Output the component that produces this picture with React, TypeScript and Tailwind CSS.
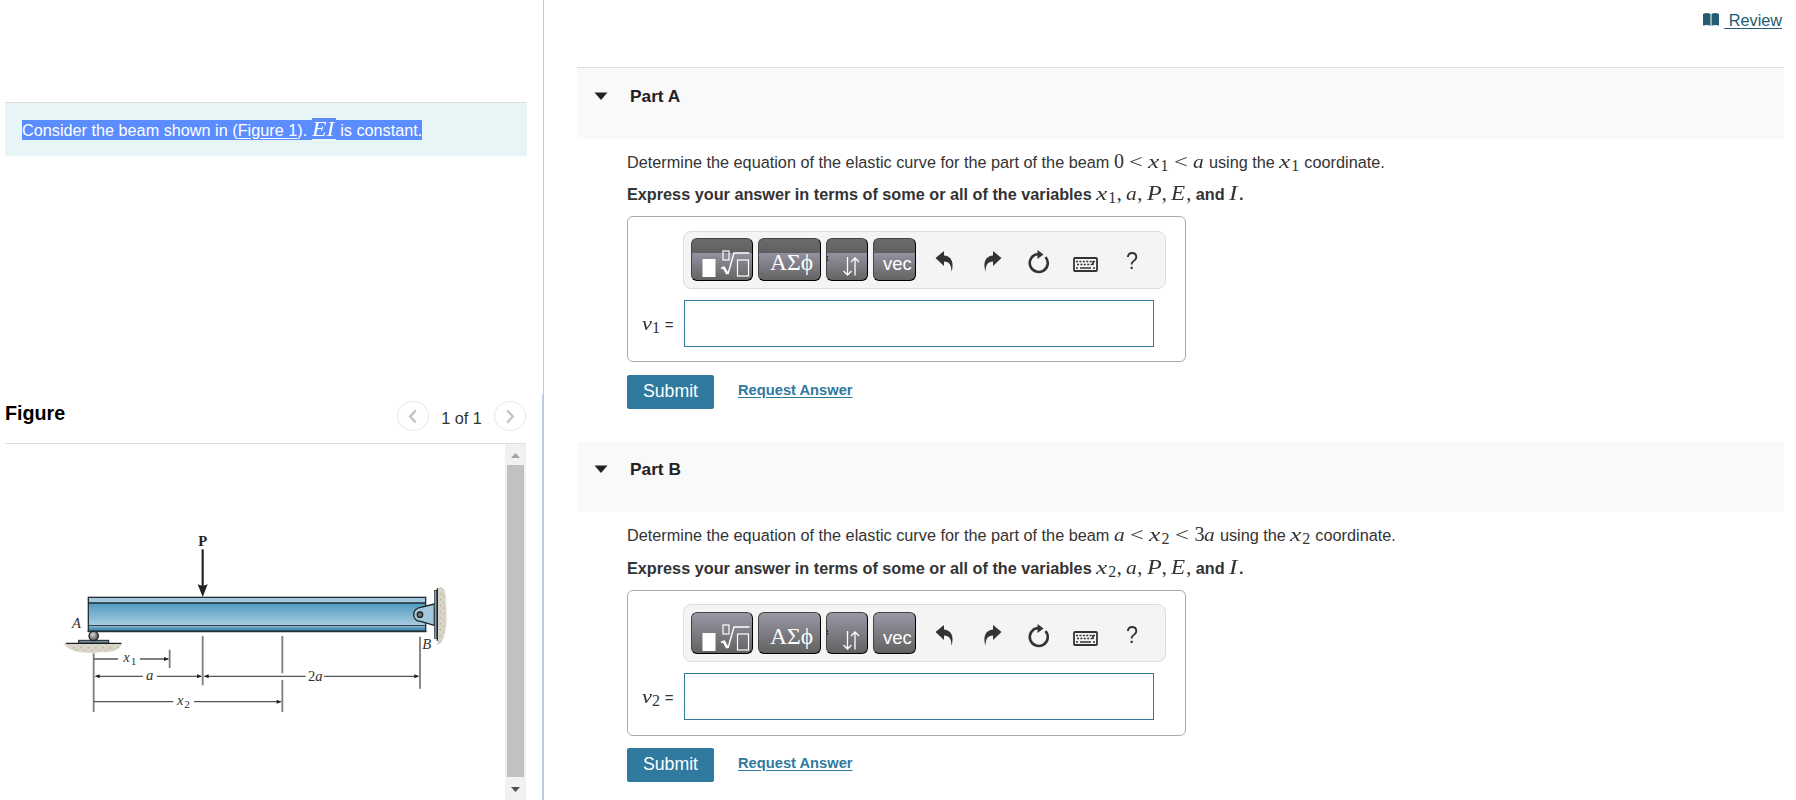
import type { ReactNode } from "react";

const serif = "inline-block whitespace-pre font-['Liberation_Serif',serif] font-normal leading-none";
const mathIt = `${serif} origin-left italic`;

function X({ sub }: { sub: string }) {
  return (
    <span>
      <span className={`${mathIt} w-[12px] scale-x-[1.3] text-[19.5px]`}>x</span>
      <Sub>{sub}</Sub>
    </span>
  );
}

function Sub({ children }: { children: ReactNode }) {
  return (
    <span className={`${serif} relative top-[3px] w-[8.5px] text-[16px]`}>{children}</span>
  );
}

// lower case a
function A() {
  return <span className={`${mathIt} w-[11px] scale-x-110 text-[19.5px]`}>a</span>;
}

function Rel() {
  return (
    <span className={`${serif} mx-[5.5px] w-[13.5px] origin-left scale-x-125 text-[19.5px]`}>
      &lt;
    </span>
  );
}

function Num({ children }: { children: ReactNode }) {
  return <span className={`${serif} w-[10px] text-[20px]`}>{children}</span>;
}

function Comma() {
  return <span className={`${serif} w-[5px] text-[20px]`}>,</span>;
}

function BeamFigure() {
  return (
    <svg width="420" height="200" viewBox="0 0 1260 600" className="block" aria-label="Beam">
      <defs>
        <linearGradient id="web" x1="0" y1="0" x2="0" y2="1">
          <stop offset="0" stopColor="#4f9cbf" />
          <stop offset="1" stopColor="#a9cce0" />
        </linearGradient>
        <radialGradient id="ball" cx="0.4" cy="0.35" r="0.7">
          <stop offset="0" stopColor="#d8d8d8" />
          <stop offset="1" stopColor="#444" />
        </radialGradient>
        <pattern id="sand" width="22" height="18" patternUnits="userSpaceOnUse">
          <rect width="22" height="18" fill="#d9d5c8" />
          <circle cx="5" cy="5" r="2.6" fill="#b3ae9f" />
          <circle cx="15" cy="12" r="2.6" fill="#bbb6a7" />
        </pattern>
        <filter id="soft" x="-20%" y="-20%" width="140%" height="140%">
          <feGaussianBlur stdDeviation="2" />
        </filter>
      </defs>

      {/* supports */}
      <path d="M40 370H216C212 390 185 400 150 396C115 402 60 400 40 370Z" fill="url(#sand)" filter="url(#soft)" />
      <path d="M1163 205C1180 194 1190 215 1187 245C1194 290 1190 365 1163 375Z" fill="url(#sand)" filter="url(#soft)" />
      <path d="M48 370H214" stroke="#222" strokeWidth="4" />
      <rect x="86" y="361" width="90" height="8" fill="#6f93a5" stroke="#222" strokeWidth="3" />

      {/* beam */}
      <rect x="115" y="232" width="1012" height="102" fill="#a3c9de" />
      <rect x="115" y="250" width="1012" height="66" fill="url(#web)" />
      <rect x="115" y="322" width="1012" height="11" fill="#4a93b8" />
      <path d="M115 249H1127" stroke="#1d2a33" strokeWidth="5" />
      <path d="M115 317H1127" stroke="#1d2a33" strokeWidth="3" />
      <rect x="115" y="232" width="1012" height="102" fill="none" stroke="#26323a" strokeWidth="4" />
      <path d="M113 334H1129" stroke="#26323a" strokeWidth="5" />
      <circle cx="131" cy="348" r="14" fill="url(#ball)" stroke="#222" strokeWidth="4" />

      {/* pin at B */}
      <path d="M1153 252L1112 262C1084 266 1084 303 1112 304L1153 316Z" fill="#a3c9de" stroke="#222" strokeWidth="4" />
      <circle cx="1110" cy="284" r="8" fill="#777" stroke="#222" strokeWidth="4" />
      <rect x="1153" y="211" width="8" height="144" fill="#6fa2bd" stroke="#333" strokeWidth="2" />
      <path d="M1162 205V362" stroke="#222" strokeWidth="4" />

      {/* load */}
      <path d="M458 88V200" stroke="#222" strokeWidth="6.500" />
      <path d="M443 193L458 198L473 193L458 231Z" fill="#222" />

      {/* dimension lines */}
      <g stroke="#808080" strokeWidth="5.500" fill="none">
        <path d="M131 400V576M359 389V444M458 348V496M697 348V460M697 480V576M1110 350V506" />
      </g>
      <g stroke="#555" strokeWidth="4" fill="none">
        <path d="M131 417H204M270 417H355M137 469H278M321 469H452M464 469H767M822 469H1104M131 545H370M432 545H692" />
      </g>
      <g fill="#222">
        <path d="M357 417L342 411V423ZM134 469L149 463V475ZM456 469L441 463V475ZM461 469L476 463V475ZM1108 469L1093 463V475ZM695 545L680 539V551Z" />
      </g>

      <g fill="#333" fontFamily="'Liberation Serif', serif" fontSize="44" fontStyle="italic">
        <text x="445" y="77" fontWeight="bold" fontStyle="normal" fill="#222">P</text>
        <text x="66" y="325">A</text>
        <text x="1117" y="388">B</text>
        <text x="220" y="426">x</text>
        <text x="242" y="435" fontStyle="normal" fontSize="34">1</text>
        <text x="288" y="479">a</text>
        <text x="774" y="484"><tspan fontStyle="normal">2</tspan>a</text>
        <text x="381" y="555">x</text>
        <text x="403" y="564" fontStyle="normal" fontSize="34">2</text>
      </g>
    </svg>
  );
}

function Chevron({ d }: { d: string }) {
  return (
    <span className="flex h-[30px] w-8 items-center justify-center rounded-[50%] border border-[#e8e8e8]">
      <svg width="10" height="15" viewBox="0 0 10 16" fill="none" stroke="#c6c6c6" strokeWidth="2.6">
        <path d={d} />
      </svg>
    </span>
  );
}

function LeftPane() {
  return (
    <aside className="flex h-[800px] w-[544px] shrink-0 flex-col">
      <div className="h-[394px] border-r border-[#bccbe0] pt-[102px] pl-[5px]">
        <div className="flex h-[54px] w-[522px] border-t border-[#ddd] bg-[#e7f5f6] pt-[17px] pl-[17px] text-[16.24px] whitespace-pre text-white">
          <span className="h-5 bg-[#5b8dff] leading-5">
            Consider the beam shown in (
            <a className="underline underline-offset-2">Figure 1</a>).{" "}
          </span>
          <span className="-mt-0.5 h-[21px] w-6 bg-[#5b8dff]">
            <span className={`${mathIt} scale-x-[1.13] text-[21px] leading-[21px]`}>EI</span>
          </span>
          <span className="h-5 bg-[#5b8dff] leading-5"> is constant.</span>
        </div>
      </div>

      <div className="flex flex-1 flex-col border-r-2 border-[#bccbe0] pl-[5px]">
        <div className="flex h-[50px] w-[521px] shrink-0 items-start border-b border-[#ddd]">
          <h2 className="pt-[7px] text-[19.7px] leading-6 font-bold text-black">Figure</h2>
          <div className="ml-auto flex items-center pt-[7px] text-[16.24px] text-[#333]">
            <Chevron d="M8 1.5L2 8L8 14.5" />
            <span className="w-[65px] pt-[3px] text-center leading-5">1 of 1</span>
            <Chevron d="M2 1.5L8 8L2 14.5" />
          </div>
        </div>
        <div className="flex w-[521px] flex-1 justify-between">
          <div className="pt-[76px] pl-[45px]">
            <BeamFigure />
          </div>
          <div className="-ml-10 flex w-[21px] flex-col items-center bg-[#f1f1f1]">
            <svg width="9" height="21" viewBox="0 0 9 21" className="shrink-0">
              <path d="M0 14H9L4.500 9Z" fill="#a3a3a3" />
            </svg>
            <div className="w-[17px] flex-1 bg-[#c1c1c1]" />
            <svg width="9" height="23" viewBox="0 0 9 23" className="shrink-0">
              <path d="M0 10H9L4.500 15Z" fill="#505050" />
            </svg>
          </div>
        </div>
      </div>
    </aside>
  );
}

const keyBtn =
  "flex shrink-0 overflow-hidden rounded-[6px] border border-t-[#444] border-l-[#444] border-r-black border-b-black text-white";
const glossy = "bg-[linear-gradient(#6c6c6c_0,#5f5f5f_14px,#9391a0_14px,#646464_100%)]";
const smooth = "bg-[linear-gradient(#9997a4,#626262)]";

function Toolbar({ first }: { first: boolean }) {
  const bg = first ? `${glossy} h-[43px]` : `${smooth} h-[42px]`;
  return (
    <div className={`-ml-px flex h-[58px] w-[483px] rounded-[8px] border border-[#ddd] bg-[#f4f4f4] pl-[7px] ${first ? "pt-1.5" : "pt-[7px]"}`}>
      <button className={`${keyBtn} ${bg} w-[62px]`}>
        <svg width="60" height="41" viewBox="0 0 60 41" fill="none" stroke="#fff">
          <rect x="10.500" y="20" width="13" height="18" fill="#fff" stroke="none" />
          <rect x="31" y="12" width="6" height="9" strokeWidth="1.2" />
          <path d="M29 29.500L32 28M36 35L42 14H57.500" strokeWidth="1.4" />
          <path d="M31.500 28L35.500 35" strokeWidth="2.600" />
          <rect x="45.500" y="21" width="11" height="16" strokeWidth="1.2" />
        </svg>
      </button>
      <button className={`${keyBtn} ${bg} ml-[5px] w-[63px] pt-[7px] pl-[11px] font-['Liberation_Serif',serif] text-[23.5px] leading-8`}>
        ΑΣϕ
      </button>
      <button className={`${keyBtn} ${bg} ml-[5px] w-[42px]`}>
        <svg width="40" height="41" viewBox="0 0 40 41" fill="none" stroke="#fff" strokeWidth="1.3">
          <path d="M20.500 18V36M16.500 32L20.500 36L24.500 32M28 36.500V19M24 23L28 19L32 23" />
          <path d="M0.500 17V19M0.500 20V22" stroke="#333" />
        </svg>
      </button>
      <button className={`${keyBtn} ${bg} ml-[5px] w-[43px] pt-[9px] pl-[9px] text-[18.5px] leading-8`}>
        vec
      </button>

      <svg width="220" height="43" viewBox="916 238 220 43" className="shrink-0" fill="#333">
        <path d="M935.500 258L944 251V255.500C951 256 954.500 262 951.500 272C951.500 265.500 949.500 261.500 944 261.500V266Z" />
        <path d="M1001.500 258L993 251V255.500C986 256 982.500 262 985.500 272C985.500 265.500 987.500 261.500 993 261.500V266Z" />
        <path d="M1045.500 257A9 9 0 1 1 1038 254" fill="none" stroke="#333" strokeWidth="2.600" />
        <path d="M1037.500 250L1043.500 254.500L1037.500 259Z" />
        <rect x="1074" y="258" width="23" height="13" rx="1" fill="none" stroke="#333" strokeWidth="1.800" />
        <path d="M1076 261.500H1095M1077 264.500H1094" stroke="#333" strokeWidth="1.700" strokeDasharray="2 1.400" />
        <path d="M1076 268H1078M1080 268H1091M1093 268H1095M1093 261V265" stroke="#333" strokeWidth="1.700" />
      </svg>
      <span className="-ml-[10px] origin-left scale-x-90 pt-[7px] text-[24px] leading-8 text-[#333]">?</span>
    </div>
  );
}

type PartProps = { title: string; n: string; range: ReactNode; first?: boolean };

function Part({ title, n, range, first = false }: PartProps) {
  return (
    <section className="text-[#333]">
      <div className={`flex w-[1207px] bg-[#f9f9f9] pl-[17px] ${first ? "h-[72px] border-t border-[#ddd]" : "h-[70px]"}`}>
        <svg width="14" height="8" viewBox="0 0 14 8" className={first ? "mt-[24px]" : "mt-[23px]"}>
          <path d="M0.500 0.500H13.500L7 8Z" fill="#222" />
        </svg>
        <h2 className={`ml-[22px] text-[17.3px] leading-5 font-bold text-[#222] ${first ? "mt-[18px]" : "mt-[17px]"}`}>
          {title}
        </h2>
      </div>

      <div className="pl-[50px]">
        <p className="mt-[11px] h-6 text-[16.26px] leading-6 whitespace-pre">
          Determine the equation of the elastic curve for the part of the beam {range} using the <X sub={n} /> coordinate.
        </p>
        <p className={`h-6 text-[16.24px] leading-6 font-bold whitespace-pre ${first ? "mt-[8px]" : "mt-[9px]"}`}>
          Express your answer in terms of some or all of the variables <X sub={n} />
          <Comma /> <A />
          <Comma /> <span className={`${mathIt} w-[15px] scale-x-[1.15] text-[21px]`}>P</span>
          <Comma /> <span className={`${mathIt} w-[15px] scale-x-110 text-[21px]`}>E</span>
          <Comma /> and <span className={`${mathIt} w-[10px] scale-x-[1.2] text-[21px]`}>I</span>.
        </p>

        <div className={`mt-[10px] h-[146px] w-[559px] rounded-[6px] border border-[#aaa] pl-[56px] ${first ? "pt-[14px]" : "pt-[13px]"}`}>
          <Toolbar first={first} />
          <div className="mt-[11px] -ml-[42px] flex items-center">
            <label className="w-[42px] pt-[3px] text-[15px] whitespace-pre">
              <span className={`${mathIt} w-[10px] scale-x-[1.15] text-[19.5px]`}>v</span>
              <Sub>{n}</Sub> =
            </label>
            <input className="h-[47px] w-[470px] border border-[#30799f] bg-white outline-none" />
          </div>
        </div>

        <div className={`flex h-[34px] items-center ${first ? "mt-[13px]" : "mt-[12px]"}`}>
          <button className="h-[34px] w-[87px] rounded-[2px] bg-[#30799f] pb-[2px] text-[17.7px] text-white">
            Submit
          </button>
          <a className="ml-[24px] pb-[4px] text-[14.7px] leading-5 font-bold text-[#30799f] underline underline-offset-2">
            Request Answer
          </a>
        </div>
      </div>
    </section>
  );
}

export default function App() {
  return (
    <main className="flex h-[800px] w-[1796px] overflow-hidden bg-white font-['Liberation_Sans',Arial,sans-serif]">
      <LeftPane />
      <div className="flex-1 pl-[33px]">
        <header className="flex h-[67px] items-start justify-end pt-[10px] pr-[14px] text-[16.24px] leading-5 text-[#235b72]">
          <svg width="16" height="13" viewBox="0 0 16 13" className="mt-[3px] mr-[5px]" fill="#235b72">
            <path d="M0 1Q4 -0.800 7.500 1V12.700Q4 11.200 0 12.500ZM8.500 1Q12 -0.800 16 1V12.500Q12 11.200 8.500 12.700Z" />
          </svg>
          <a className="whitespace-pre underline underline-offset-2"> Review</a>
        </header>
        <Part
          first
          title="Part A"
          n="1"
          range={<><Num>0</Num><Rel /><X sub="1" /><Rel /><A /></>}
        />
        <div className="h-[33px]" />
        <Part
          title="Part B"
          n="2"
          range={<><A /><Rel /><X sub="2" /><Rel /><Num>3</Num><A /></>}
        />
      </div>
    </main>
  );
}
